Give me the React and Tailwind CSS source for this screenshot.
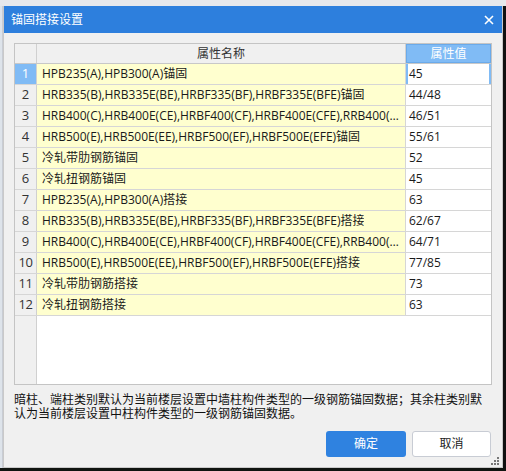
import React from 'react';

const ROWS = [
  ['HPB235(A),HPB300(A)锚固', '45'],
  ['HRB335(B),HRB335E(BE),HRBF335(BF),HRBF335E(BFE)锚固', '44/48'],
  ['HRB400(C),HRB400E(CE),HRBF400(CF),HRBF400E(CFE),RRB400(D)锚固', '46/51'],
  ['HRB500(E),HRB500E(EE),HRBF500(EF),HRBF500E(EFE)锚固', '55/61'],
  ['冷轧带肋钢筋锚固', '52'],
  ['冷轧扭钢筋锚固', '45'],
  ['HPB235(A),HPB300(A)搭接', '63'],
  ['HRB335(B),HRB335E(BE),HRBF335(BF),HRBF335E(BFE)搭接', '62/67'],
  ['HRB400(C),HRB400E(CE),HRBF400(CF),HRBF400E(CFE),RRB400(D)搭接', '64/71'],
  ['HRB500(E),HRB500E(EE),HRBF500(EF),HRBF500E(EFE)搭接', '77/85'],
  ['冷轧带肋钢筋搭接', '73'],
  ['冷轧扭钢筋搭接', '63'],
];

const font = { fontFamily: '"Open Sans", "Noto Sans CJK SC", sans-serif' };

export default function App() {
  return (
    <div className="w-[506px] h-[471px] flex flex-col bg-[#151515] overflow-hidden" style={font}>
      {/* window behind */}
      <div className="h-[6px] bg-[#e6e8ec] shrink-0" />
      <div className="flex flex-1 min-h-0">
        <div className="w-[3px] bg-[#dde3ea] border-r border-[#c8ccd4]" />
        <div className="w-[500px] h-[462px] flex flex-col bg-[#f0f0f0] border border-[#c9c9c9] border-t-0">
          {/* title bar */}
          <div className="h-[27px] bg-[#2d7fdd] flex items-center justify-between pl-[7px] pr-[8px] shrink-0">
            <span className="text-white text-[12px]">锚固搭接设置</span>
            <svg width="10" height="10" viewBox="0 0 10 10">
              <path d="M1 1 L9 9 M9 1 L1 9" stroke="#fff" strokeWidth="1.6" />
            </svg>
          </div>

          {/* body */}
          <div className="flex flex-col pl-[10px] pr-[11px] pt-[10px] flex-1">
            <div className="w-[478px] h-[342px] border border-[#c4c4c4] bg-white flex flex-col text-[12px] text-[#1a1a1a]">
              {/* header */}
              <div className="flex h-[20px] border-b border-[#c8c8c8] shrink-0">
                <div className="w-[22px] bg-[#f0f0f0] border-r border-[#d0d0d0]" />
                <div className="w-[369px] bg-[#f0f0f0] border-r border-[#d0d0d0] flex items-center justify-center text-[#333]">
                  属性名称
                </div>
                <div className="w-[85px] bg-[#80bbf5] border border-[#6aaaea] flex items-center justify-center text-white">
                  属性值
                </div>
              </div>
              {ROWS.map(([name, val], i) => (
                <div key={i} className="flex h-[21px] border-b border-[#d6d6d6] shrink-0">
                  <div
                    className={`w-[22px] border-r border-[#d0d0d0] flex items-center justify-center text-[13px] ${
                      i === 0 ? 'bg-[#80bbf5] text-white' : 'bg-[#f0f0f0] text-[#333]'
                    } ${i >= 9 ? 'tracking-[-0.5px]' : ''}`}
                  >
                    {i + 1}
                  </div>
                  <div className="w-[369px] bg-[#ffffcf] border-r border-[#d6d6d6] flex items-center pl-[5px] pr-[4px] min-w-0">
                    <span className="truncate">{name}</span>
                  </div>
                  <div
                    className={`w-[85px] flex items-center bg-white ${
                      i === 0 ? 'border-l-2 border-r-2 border-[#80bbf5] pl-[1px]' : 'pl-[3px]'
                    }`}
                  >
                    {val}
                  </div>
                </div>
              ))}
              <div className="flex flex-1">
                <div className="w-[22px] bg-[#f0f0f0] border-r border-[#d0d0d0]" />
                <div className="flex-1 bg-white" />
              </div>
            </div>

            <p className="w-[478px] mt-[8px] text-[12px] leading-[14px] text-[#111]">
              暗柱、端柱类别默认为当前楼层设置中墙柱构件类型的一级钢筋锚固数据；其余柱类别默认为当前楼层设置中柱构件类型的一级钢筋锚固数据。
            </p>

            <div className="flex justify-end gap-[6px] mt-auto mb-[10px] relative">
              <button className="w-[80px] h-[26px] rounded-[3px] bg-[#2f82e0] text-white text-[12px]">确定</button>
              <button className="w-[79px] h-[26px] rounded-[3px] bg-white border border-[#c8ccd4] text-[#222] text-[12px]">取消</button>
              <div className="absolute right-[-8px] bottom-[-8px] grid grid-cols-3 gap-[1px]">
                <span className="w-[2px] h-[2px]" />
                <span className="w-[2px] h-[2px]" />
                <span className="w-[2px] h-[2px] bg-[#777]" />
                <span className="w-[2px] h-[2px]" />
                <span className="w-[2px] h-[2px] bg-[#777]" />
                <span className="w-[2px] h-[2px] bg-[#777]" />
                <span className="w-[2px] h-[2px] bg-[#777]" />
                <span className="w-[2px] h-[2px] bg-[#777]" />
                <span className="w-[2px] h-[2px] bg-[#777]" />
              </div>
            </div>
          </div>
        </div>
        <div className="w-[3px] bg-[#111]" />
      </div>
      <div className="h-[3px] bg-[#101410] shrink-0" />
    </div>
  );
}
